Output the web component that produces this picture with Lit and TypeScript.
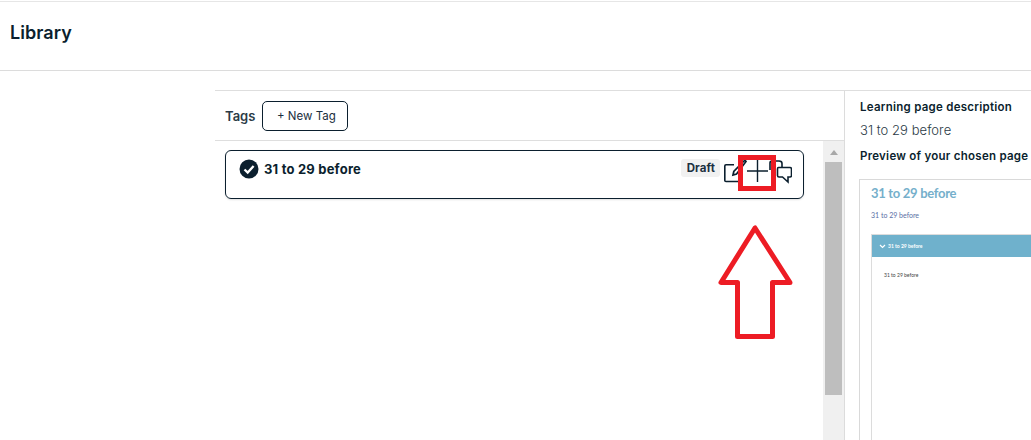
import { LitElement, html, css, svg } from "lit";
import { customElement } from "lit/decorators.js";

@customElement("app-root")
export class AppRoot extends LitElement {
  static styles = css`
    :host { display: block; width: 1031px; height: 440px; overflow: hidden; position: relative; background: #fff; font-family: Inter, "Liberation Sans", sans-serif; color: #0b1f2e; }
    .top { height: 68px; margin-top: 1px; border-top: 1px solid #e6e6e6; border-bottom: 1px solid #dcdcdc; display: flex; align-items: center; padding-left: 10px; }
    .top h1 { margin: 0 0 6px; font-size: 18px; font-weight: 600; line-height: 24px; letter-spacing: .05px; }
    .main { margin: 19px 0 0 215px; border-top: 1px solid #dedede; display: flex; height: 350px; }
    .left { width: 629px; border-right: 1px solid #dcdcdc; flex: none; display: flex; flex-direction: column; }
    .tagbar { height: 49px; border-bottom: 1px solid #dedede; display: flex; align-items: center; gap: 7px; padding-left: 10px; }
    .tagbar b { font-size: 13px; font-weight: 600; color: #2b3a46; }
    .btn { width: 86px; height: 30px; border: 1px solid #0b1f2e; border-radius: 5px; background: #fff; font: 400 11.5px Inter, sans-serif; color: #1b3040; padding: 0 0 0 2px; }
    .body { flex: 1; display: flex; min-height: 0; }
    .list { flex: 1; padding: 9px 19px 0 10px; }
    .card { box-sizing: border-box; height: 49px; border: 1px solid #0b1f2e; border-radius: 6px; box-shadow: 0 1px 2px rgba(0,0,0,.12); display: flex; align-items: flex-start; padding: 8px 11px 0 13px; gap: 5px; }
    .check { width: 20px; height: 20px; flex: none; }
    .name { flex: 1; font-size: 13px; font-weight: 700; line-height: 20px; letter-spacing: .2px; }
    .draft { font-size: 11.5px; font-weight: 700; line-height: 18px; background: #f1f1f1; border-radius: 3px; padding: 0 5px 0 6px; color: #1b3040; margin: 0 -3px 0 0; letter-spacing: .1px; }
    .icons { display: flex; margin-top: -1px; }
    .icons svg { display: block; }
    .track { width: 21px; flex: none; background: #f0f0f0; display: flex; flex-direction: column; align-items: center; padding-top: 9px; box-sizing: border-box; }
    .up { width: 0; height: 0; border-left: 4px solid transparent; border-right: 4px solid transparent; border-bottom: 5px solid #a8a8a8; }
    .thumb { width: 17px; height: 233px; margin-top: 7px; background: #bebebe; }
    .right { flex: 1; padding: 9px 0 0 15px; min-width: 0; white-space: nowrap; }
    .lbl { font-size: 11.5px; font-weight: 600; line-height: 14px; letter-spacing: .26px; }
    .desc { font-size: 13px; line-height: 18px; margin: 7px 0 10px; font-weight: 300; color: #2b3a46; letter-spacing: .05px; }
    .lbl2 { margin-bottom: 16px; }
    .prev { height: 300px; margin: 0 -20px 0 -1px; border: 1px solid #d9d9d9; border-bottom: 0; padding: 5px 0 0 11px; font-family: Lato, sans-serif; }
    .p-title { font-size: 13px; font-weight: 700; color: #75afcb; line-height: 16px; letter-spacing: -.3px; }
    .p-sub { font-size: 7px; color: #5a6fa5; margin: 9px 0 14px; line-height: 10px; }
    .panel { border: 1px solid #dcdcdc; border-right: 0; }
    .p-head { height: 22px; background: #6fb1cc; color: #fff; font-size: 5px; font-weight: 700; display: flex; align-items: center; gap: 2px; padding-left: 7px; margin-bottom: 15px; }
    .p-text { font-size: 5px; color: #444; padding-left: 12px; height: 200px; }
    .overlay { position: absolute; left: 0; top: 0; pointer-events: none; }
  `;

  render() {
    return html`
      <div class="top"><h1>Library</h1></div>
      <div class="main">
        <div class="left">
          <div class="tagbar"><b>Tags</b><button class="btn">+ New Tag</button></div>
          <div class="body">
            <div class="list">
              <div class="card">
                <svg class="check" viewBox="0 0 20 20">
                  <circle cx="10" cy="10" r="9.5" fill="#0b1f2e"></circle>
                  <path d="M5.5 10.5 8.7 13.6 14.6 7" fill="none" stroke="#fff" stroke-width="2.3"></path>
                </svg>
                <div class="name">31 to 29 before</div>
                <span class="draft">Draft</span>
                <div class="icons">
                  <svg width="70" height="30" viewBox="0 0 70 30" fill="none" stroke="#0b1f2e" stroke-width="1.6">
                    <path d="M12 6.800H4Q2.800 6.800 2.800 8V22.500Q2.800 23.500 4 23.500H17Q18.500 23.500 18.500 22V16"></path>
                    <path d="M11 17 11.800 13.500 20 5 23 2 24 3.500 14.500 16Z" stroke-width="1.700"></path>
                    <path d="M48 12V5Q48 3 50 3H57Q60 3 60 5.500V9"></path>
                    <path d="M56.500 9.500H68Q69.500 9.500 69.500 11V17.500Q69.500 19 68 19H66V24L60.500 19H57Q55.500 19 55.500 17.500V11Q55.500 9.500 56.500 9.500Z"></path>
                    <path d="M25 13H46M35.500 2V24" stroke-width="1.400"></path>
                  </svg>
                </div>
              </div>
            </div>
            <div class="track"><div class="up"></div><div class="thumb"></div></div>
          </div>
        </div>
        <div class="right">
          <div class="lbl">Learning page description</div>
          <div class="desc">31 to 29 before</div>
          <div class="lbl lbl2">Preview of your chosen page</div>
          <div class="prev">
            <div class="p-title">31 to 29 before</div>
            <div class="p-sub">31 to 29 before</div>
            <div class="panel">
              <div class="p-head">
                <svg width="7" height="5" viewBox="0 0 7 5"><path d="M1 1 3.500 3.500 6 1" fill="none" stroke="#fff" stroke-width="1.200"></path></svg>
                <span>31 to 29 before</span>
              </div>
              <div class="p-text">31 to 29 before</div>
            </div>
          </div>
        </div>
      </div>
      <svg class="overlay" width="1031" height="440" fill="none" stroke="#ed1c24">
        ${svg`<rect x="740.500" y="157.500" width="33" height="31" stroke-width="5"></rect>
        <path d="M755 228 721 282.500H737.500V336.500H772.500V282.500H790Z" stroke-width="5" stroke-linejoin="round"></path>`}
      </svg>
    `;
  }
}
